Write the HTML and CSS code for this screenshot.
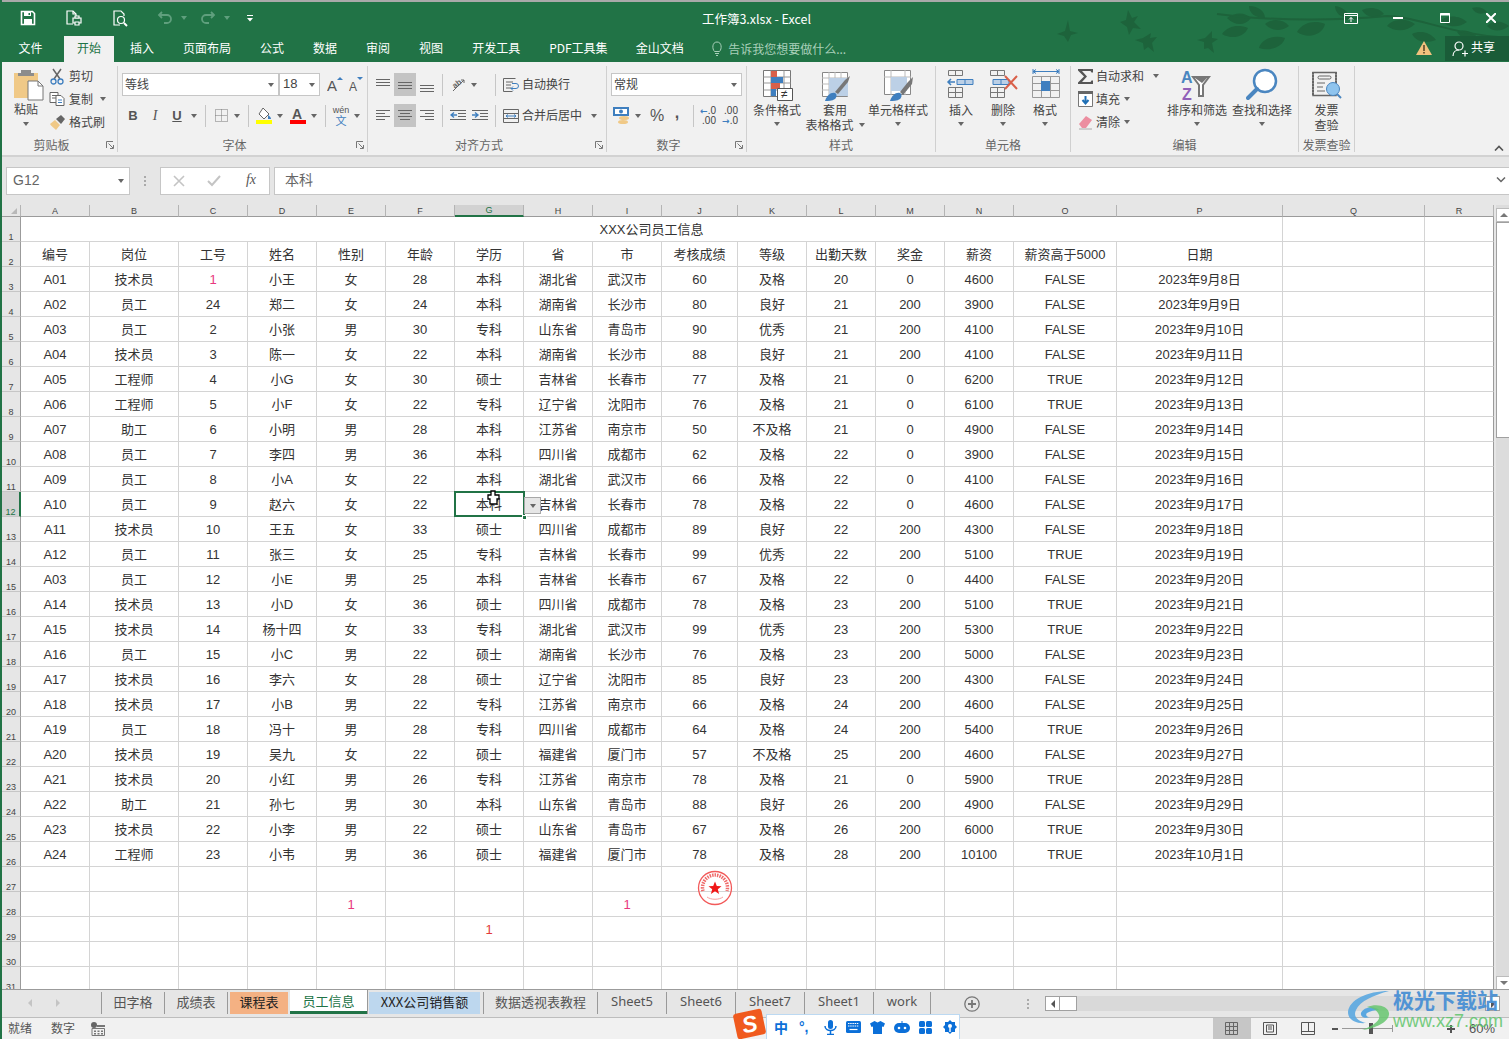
FILE: index.html
```html
<!DOCTYPE html>
<html lang="zh-CN">
<head>
<meta charset="utf-8">
<title>工作簿3.xlsx - Excel</title>
<link rel="stylesheet" href="styles.css">
</head>
<body>
<div class="app">
  <div class="top-strip"></div>
  <header class="head">
    <svg class="deco" width="470" height="60" viewBox="0 0 470 60" fill="#1d633b">
      <g transform="translate(-22 2)">
      <path d="M40 30l8-3 3-11 2 11 8 2-7 2-3 7-4-6zM103 18l6-2 2-10 4 8 6-2-4 6 7 7-8-1-4 7-2-8zM118 36l8-2 8-5-1 5 7-1-5 6 2 9-6-5-4 3-1-7zM180 36l8-2 7-7v7l6 1-6 4 2 10-6-5-4 1 0-7z"/>
      <path d="M210 14c8-6 18-6 24 0-6 8-16 8-24 0zM232 2c10 0 16 6 16 12-10 0-16-5-16-12zM205 30c6-8 16-10 26-6-4 9-16 12-26 6zM248 20c8-6 18-5 24 2-8 6-18 5-24-2zM280 28c6-10 18-12 28-8-2 10-16 16-28 8zM268 34c-2 8-14 14-26 10 2-8 14-14 26-10zM345 6c8-4 18-2 22 4-8 5-18 4-22-4zM370 22c6-8 20-8 28-2-8 8-20 8-28 2zM395 30c8-4 18-2 24 6-10 4-20 2-24-6zM424 16c8-6 20-4 26 2-8 6-20 6-26-2zM440 28c8-4 18 0 22 8-10 2-18-2-22-8zM455 4c6-2 12 0 15 4-6 3-12 2-15-4zM432 42c2-6 8-10 14-8 0 8-6 14-14 8zM318 2c8 1 14 6 14 12-8 0-14-5-14-12zM470 22c6-6 14-6 22 0-8 6-16 6-22 0zM478 34c6-4 12-2 16 6-8 2-14 0-16-6z"/>
      <path d="M200 10c60 8 130 6 170 2 30 0 60 18 122 22" fill="none" stroke="#1d633b" stroke-width="2"/>
      </g>
    </svg>
    <div class="titlebar">
      <div class="qat">
        <svg class="q1" width="16" height="16" viewBox="0 0 16 16"><path d="M1.500 1.500h11l2 2v11h-13z" fill="none" stroke="#fff" stroke-width="1.600"/><path d="M4 2h7v4H4zM4 9h8v5H4z" fill="#fff"/><path d="M8.500 3h1.500v2H8.500z" fill="#217346"/></svg>
        <svg class="q2" width="18" height="18" viewBox="0 0 18 18" fill="none" stroke="#fff" stroke-width="1.200"><path d="M8 15H2V2h6l3 3v3"/><path d="M8 2v3h3"/><path d="M8 9h8v5H8z" fill="#217346"/><path d="M10 7h4v2h-4zM10 13h4v3h-4z" fill="#217346"/></svg>
        <svg class="q3" width="18" height="18" viewBox="0 0 18 18" fill="none" stroke="#fff" stroke-width="1.200"><path d="M8 16H2V2h7l3 3v2"/><circle cx="9" cy="11" r="3.500"/><path d="M12 14l3 3" stroke-width="2"/></svg>
        <svg class="q4" width="16" height="16" viewBox="0 0 16 16" fill="none" stroke="#5f9f7d" stroke-width="1.800"><path d="M5 2L2 5l3 3M2.500 5H10a4 4 0 0 1 0 8H7"/></svg>
        <i class="caret dim"></i>
        <svg class="q5" width="16" height="16" viewBox="0 0 16 16" fill="none" stroke="#5f9f7d" stroke-width="1.800"><path d="M11 2l3 3-3 3M13.500 5H6a4 4 0 0 0 0 8h3"/></svg>
        <i class="caret dim"></i>
        <svg class="q6" width="8" height="8" viewBox="0 0 8 8" fill="#fff"><path d="M1 1h6v1H1zM1 4h6L4 7.500z"/></svg>
      </div>
      <div class="doc-title">工作簿3.xlsx - Excel</div>
      <div class="winctl">
        <svg width="14" height="11" viewBox="0 0 14 11" fill="none" stroke="#fff"><path d="M.5.500h13v10H.5z"/><path d="M.5 2.500h13"/><path d="M7 9V4.500M5 6.500l2-2 2 2"/></svg>
        <svg class="w-min" width="10" height="10" viewBox="0 0 10 10"><path d="M0 4h10v2H0z" fill="#fff"/></svg>
        <svg class="w-max" width="10" height="10" viewBox="0 0 10 10" fill="none" stroke="#fff"><path d="M.5.500h9v9h-9z"/><path d="M0 1.500h10" stroke-width="2"/></svg>
        <svg class="w-close" width="10" height="10" viewBox="0 0 10 10" fill="none" stroke="#fff" stroke-width="2"><path d="M0 0l10 10M10 0L0 10"/></svg>
      </div>
    </div>
    <nav class="tabs">
      <span class="tab tab-file">文件</span>
      <span class="tab tab-on">开始</span>
      <span class="tab">插入</span>
      <span class="tab">页面布局</span>
      <span class="tab">公式</span>
      <span class="tab">数据</span>
      <span class="tab">审阅</span>
      <span class="tab">视图</span>
      <span class="tab">开发工具</span>
      <span class="tab">PDF工具集</span>
      <span class="tab t-wps">金山文档</span>
      <span class="tell">
        <svg width="12" height="15" viewBox="0 0 12 15" fill="none" stroke="#a9d0ba"><path d="M3.500 10.500C1 8 1 1 6 1s5 7 2.500 9.500zM4 12.500h4M5 14.500h2"/></svg>
        告诉我您想要做什么...
      </span>
      <svg class="warn" width="16" height="14" viewBox="0 0 16 14"><path d="M8 0l8 14H0z" fill="#f2c27e"/><path d="M7.200 4h1.600v6H7.200zM7.200 11h1.600v1.600H7.200z" fill="#5b4a2a"/></svg>
      <span class="share">
        <svg width="16" height="16" viewBox="0 0 16 16" fill="none" stroke="#fff" stroke-width="1.200"><circle cx="7" cy="5" r="4"/><path d="M1 15c0-4 3-6 6-6M10 12.500h6M13 9.500v6"/></svg>
        <span class="share-t">共享</span>
      </span>
    </nav>
  </header>

  <section class="ribbon">
    <div class="group g-clip">
      <div class="gbody">
        <div class="big b-paste">
          <svg class="paste-ic" width="32" height="34" viewBox="0 0 32 34"><path d="M2 5h24v25H2z" fill="#f0c987"/><path d="M9 2h10v3h3v3H6V5h3z" fill="#8c8c8c"/><path d="M16 13h10l5 5v14H16z" fill="#fff" stroke="#777"/><path d="M26 13v5h5" fill="none" stroke="#777"/></svg>
          <span class="bl bl-up">粘贴</span><i class="caret"></i>
        </div>
        <div class="stack s-clip">
          <div class="srow"><svg width="14" height="17" viewBox="0 0 14 17" fill="none"><path d="M3 1l7 10M11 1L4 11" stroke="#666" stroke-width="1.500"/><circle cx="3.500" cy="13.500" r="2.500" stroke="#3f7fbf" stroke-width="1.300"/><circle cx="10.500" cy="13.500" r="2.500" stroke="#3f7fbf" stroke-width="1.300"/></svg><span class="st">剪切</span></div>
          <div class="srow"><svg width="15" height="14" viewBox="0 0 15 14" fill="#fff" stroke="#666"><path d="M.5.500h8v10h-8zM2.500 3.500h4M2.500 6h4"/><path d="M6.500 3.500h5l3 3v7h-8z"/><path d="M8.500 8h4M8.500 10.500h4" stroke="#3f7fbf"/></svg><span class="st">复制</span><i class="caret cm1"></i></div>
          <div class="srow"><svg width="16" height="15" viewBox="0 0 16 15"><path d="M1 9l5-4 5 5-4 5C5 13 2 11 1 9z" fill="#f0c987"/><path d="M7 4l5-4 4 4-4 5z" fill="#666"/></svg><span class="st">格式刷</span></div>
        </div>
      </div>
      <div class="glabel lp">剪贴板<svg class="launch" width="8" height="8" viewBox="0 0 8 8" fill="none" stroke="#777"><path d="M.5 7V.5H7M2.500 2.500L7 7M4 7.500h3.500V4"/></svg></div>
    </div>

    <div class="group g-font">
      <div class="gbody col">
        <div class="row1">
          <span class="sel s-font"><span class="sv">等线</span><i class="caret"></i></span>
          <span class="sel s-size"><span class="sv">18</span><i class="caret"></i></span>
          <svg class="fs" width="16" height="16" viewBox="0 0 16 16"><text x="0" y="14" class="svgA">A</text><path d="M10 3l3-3 3 3z" fill="#3f7fbf"/></svg>
          <svg class="fs2" width="14" height="16" viewBox="0 0 14 16"><text x="0" y="14" class="svgA2">A</text><path d="M8 0h6l-3 3z" fill="#3f7fbf"/></svg>
        </div>
        <div class="row2">
          <span class="ib strong">B</span>
          <span class="ib ital">I</span>
          <span class="ib under">U</span>
          <span class="cb w12"><i class="caret"></i></span>
          <span class="vsep v1"></span>
          <span class="ib"><svg width="13" height="13" viewBox="0 0 13 13" fill="none" stroke="#777" stroke-dasharray="1 1"><path d="M.5.500h12v12H.5zM6.500.500v12M.5 6.500h12"/></svg></span>
          <span class="cb"><i class="caret"></i></span>
          <span class="vsep v2"></span>
          <span class="ib"><svg width="16" height="17" viewBox="0 0 16 17"><path d="M7 1l6 6-5 5-5-5z" fill="#fff" stroke="#666"/><path d="M12 8c2 1 3 3 3 4h-3z" fill="#3f7fbf"/><path d="M0 13h16v4H0z" fill="#ffff00"/></svg></span>
          <span class="cb"><i class="caret"></i></span>
          <span class="ib m2"><svg width="16" height="17" viewBox="0 0 16 17"><text x="2" y="12" class="svgA3">A</text><path d="M0 13h16v4H0z" fill="#f00"/></svg></span>
          <span class="cb"><i class="caret"></i></span>
          <span class="vsep v3"></span>
          <span class="ib wen">wén<b>文</b></span>
          <span class="cb"><i class="caret"></i></span>
        </div>
      </div>
      <div class="glabel lp">字体<svg class="launch" width="8" height="8" viewBox="0 0 8 8" fill="none" stroke="#777"><path d="M.5 7V.5H7M2.500 2.500L7 7M4 7.500h3.500V4"/></svg></div>
    </div>

    <div class="group g-align">
      <div class="gbody col">
        <div class="row1">
          <span class="ib"><svg width="14" height="14" viewBox="0 0 14 14" stroke="#666"><path d="M0 1.500h14M0 4.500h14M0 7.500h14"/></svg></span>
          <span class="ib ibon"><svg width="14" height="14" viewBox="0 0 14 14" stroke="#666"><path d="M0 4.500h14M0 7.500h14M0 10.500h14"/></svg></span>
          <span class="ib"><svg width="14" height="14" viewBox="0 0 14 14" stroke="#666"><path d="M0 7.500h14M0 10.500h14M0 13.500h14"/></svg></span>
          <span class="vsep va"></span>
          <span class="ib"><svg class="orient" width="17" height="17" viewBox="0 0 17 17" fill="none"><text x="2" y="11" transform="rotate(-38 6 8)" class="svgab">ab</text><path d="M3 15L14 4" stroke="#666"/><path d="M11 4h3v3" stroke="#666"/></svg></span>
          <span class="cb"><i class="caret"></i></span>
          <span class="vsep vb"></span>
          <svg class="mi" width="16" height="16" viewBox="0 0 16 16" fill="none" stroke="#666"><path d="M.5 1.500h12M.5 1.500v13h9M3 5h7M3 8h5M3 11h5"/><path d="M8 11.500h5a2 2 0 0 0 0-5H9M10 9.500l-2 2 2 2" stroke="#3f7fbf"/></svg>
          <span class="st st3">自动换行</span>
        </div>
        <div class="row2">
          <span class="ib"><svg width="14" height="12" viewBox="0 0 14 12" stroke="#666"><path d="M0 .5h14M0 3.500h9M0 6.500h14M0 9.500h9"/></svg></span>
          <span class="ib ibon"><svg width="14" height="12" viewBox="0 0 14 12" stroke="#666"><path d="M0 .5h14M2 3.500h10M0 6.500h14M2 9.500h10"/></svg></span>
          <span class="ib"><svg width="14" height="12" viewBox="0 0 14 12" stroke="#666"><path d="M0 .5h14M5 3.500h9M0 6.500h14M5 9.500h9"/></svg></span>
          <span class="vsep va"></span>
          <span class="ib"><svg width="16" height="12" viewBox="0 0 16 12" fill="none" stroke="#666"><path d="M0 .5h16M8 3.500h8M8 6.500h8M0 9.500h16"/><path d="M7 5H1M4 2.500L1 5l3 2.500" stroke="#3f7fbf" stroke-width="1.400"/></svg></span>
          <span class="ib"><svg width="16" height="12" viewBox="0 0 16 12" fill="none" stroke="#666"><path d="M0 .5h16M8 3.500h8M8 6.500h8M0 9.500h16"/><path d="M0 5h6M3 2.500L6 5 3 7.500" stroke="#3f7fbf" stroke-width="1.400"/></svg></span>
          <span class="vsep vc"></span>
          <svg class="mi" width="16" height="14" viewBox="0 0 16 14" fill="none" stroke="#666"><path d="M.5.500h15v13H.5zM.5 4.500h15M.5 9.500h15"/><path d="M3 7h10M3 7l2-1.500M3 7l2 1.500M13 7l-2-1.500M13 7l-2 1.500" stroke="#3f7fbf"/></svg>
          <span class="st st3">合并后居中</span>
          <i class="caret c-merge"></i>
        </div>
      </div>
      <div class="glabel lp">对齐方式<svg class="launch" width="8" height="8" viewBox="0 0 8 8" fill="none" stroke="#777"><path d="M.5 7V.5H7M2.500 2.500L7 7M4 7.500h3.500V4"/></svg></div>
    </div>

    <div class="group g-num">
      <div class="gbody col">
        <div class="row1"><span class="sel s-num"><span class="sv">常规</span><i class="caret"></i></span></div>
        <div class="row2">
          <span class="ib"><svg width="18" height="17" viewBox="0 0 18 17"><path d="M0 0h16v9H0z" fill="#3f7fbf"/><path d="M2 2h12v5H2z" fill="#fff"/><circle cx="8" cy="4.500" r="2" fill="#3f7fbf"/><ellipse cx="11" cy="11" rx="5" ry="2" fill="#f0c987"/><ellipse cx="10" cy="15" rx="5" ry="2" fill="#f0c987"/></svg></span>
          <span class="cb"><i class="caret"></i></span>
          <span class="ib pct">%</span>
          <span class="ib comma">,</span>
          <span class="vsep vd"></span>
          <span class="ib dec"><span><b class="arr">←</b>.0</span><span>.00</span></span>
          <span class="ib dec"><span>.00</span><span><b class="arr">→</b>.0</span></span>
        </div>
      </div>
      <div class="glabel lp">数字<svg class="launch" width="8" height="8" viewBox="0 0 8 8" fill="none" stroke="#777"><path d="M.5 7V.5H7M2.500 2.500L7 7M4 7.500h3.500V4"/></svg></div>
    </div>

    <div class="group g-style">
      <div class="gbody">
        <div class="big b58">
          <svg width="32" height="34" viewBox="0 0 32 34"><path d="M2.500 2.500h27v26h-27z" fill="#fff" stroke="#777"/><path d="M2.500 9h27M2.500 15h27M2.500 22h27M10 2.500v26M23 2.500v26" stroke="#999" fill="none"/><path d="M10 3h6v6h-6zM10 15h9v6h-9z" fill="#d9604a"/><path d="M10 9h12v6H10zM10 21h5v7h-5z" fill="#3f7fbf"/><path d="M16.500 20.500h15v12h-15z" fill="#fff" stroke="#555"/><text x="20" y="30" class="svgne">≠</text></svg>
          <span class="bl">条件格式</span><i class="caret"></i>
        </div>
        <div class="big b58">
          <svg width="32" height="34" viewBox="0 0 32 34"><path d="M3.500 4.500h25v24h-25z" fill="#fff" stroke="#888"/><path d="M3 10h26M3 16h26M3 22h26M10 4v24M16 4v24M22 4v24" stroke="#bbb"/><path d="M10 10h19v18H10z" fill="#bcd0e6"/><path d="M6 33c2-6 6-9 10-8 2 1 2 4 0 6-3 2-7 2-10 2z" fill="#3f7fbf"/><path d="M16 24l10-12 5-4-2 6-10 12z" fill="#777"/></svg>
          <span class="bl">套用</span><span class="bl">表格格式<i class="caret cin"></i></span>
        </div>
        <div class="big b68">
          <svg width="32" height="34" viewBox="0 0 32 34"><path d="M2.500 2.500h26v24h-26z" fill="#fff" stroke="#888"/><path d="M2 9h27M9 2v25M23 2v25" stroke="#bbb"/><path d="M9 9h16v14H9z" fill="#bcd0e6"/><path d="M8 33c2-6 6-9 10-8 2 1 2 4 0 6-3 2-7 2-10 2z" fill="#3f7fbf"/><path d="M18 24l8-10 5-5-1 7-9 11z" fill="#777"/></svg>
          <span class="bl">单元格样式</span><i class="caret"></i>
        </div>
      </div>
      <div class="glabel">样式</div>
    </div>

    <div class="group g-cell">
      <div class="gbody">
        <div class="big b42">
          <svg width="32" height="34" viewBox="0 0 32 34" fill="none" stroke="#777"><path d="M3.500 2.500h14v5h-14zM10.500 2.500v5M3.500 19.500h14v10h-14zM3.500 24.500h14M10.500 19.500v10"/><path d="M12 11.500h16v5H12zM20 11.500v5" fill="#bcd0e6" stroke="#3f7fbf"/><path d="M10 14H3M6 11l-3 3 3 3" stroke="#3f7fbf" stroke-width="1.500"/></svg>
          <span class="bl">插入</span><i class="caret"></i>
        </div>
        <div class="big b42">
          <svg width="32" height="34" viewBox="0 0 32 34" fill="none" stroke="#777"><path d="M3.500 2.500h14v5h-14zM10.500 2.500v5M3.500 19.500h14v10h-14zM3.500 24.500h14M10.500 19.500v10"/><path d="M6 11.500h16v5H6zM14 11.500v5" fill="#bcd0e6" stroke="#3f7fbf"/><path d="M18 8l12 13M30 8L18 21" stroke="#d9604a" stroke-width="2"/></svg>
          <span class="bl">删除</span><i class="caret"></i>
        </div>
        <div class="big b42">
          <svg width="32" height="34" viewBox="0 0 32 34" fill="none" stroke="#777"><path d="M3.500 8.500h27v21h-27zM3.500 15.500h27M3.500 22.500h27M12.500 8.500v21M21.500 8.500v21" stroke="#999"/><path d="M12 13h9v10h-9z" fill="#3f7fbf" stroke="none"/><path d="M4 3.500h26M4 1v5M30 1v5M4 3.500l3-2M4 3.500l3 2M30 3.500l-3-2M30 3.500l-3 2" stroke="#3f7fbf"/></svg>
          <span class="bl">格式</span><i class="caret"></i>
        </div>
      </div>
      <div class="glabel">单元格</div>
    </div>

    <div class="group g-edit">
      <div class="gbody">
        <div class="stack s-edit">
          <div class="srow"><svg width="15" height="15" viewBox="0 0 15 15"><path d="M0 0h15v3.500h-1.500L12.500 2H4l5 5.500L4 13h8.500l1-1.500H15V15H0v-1.500L6 7.500 0 1.500z" fill="#555"/></svg><span class="st st4">自动求和</span><i class="caret c-sum"></i></div>
          <div class="srow"><svg width="15" height="16" viewBox="0 0 15 16"><path d="M.5.500h14v15H.5z" fill="#fff" stroke="#777"/><path d="M0 0h15v3H0z" fill="#666"/><path d="M7.500 5v7M4.500 9l3 3.500 3-3.500" fill="none" stroke="#1f6fb5" stroke-width="2"/></svg><span class="st st4">填充</span><i class="caret c-in"></i></div>
          <div class="srow"><svg width="15" height="15" viewBox="0 0 15 15"><path d="M1 9l7-8 6 4-6 8H4z" fill="#ec8ea0"/><path d="M1 14h13" stroke="#aaa"/></svg><span class="st st4">清除</span><i class="caret c-in"></i></div>
        </div>
        <div class="big b64">
          <svg width="32" height="34" viewBox="0 0 32 34"><text x="0" y="15" class="svgaz a">A</text><text x="1" y="32" class="svgaz z">Z</text><path d="M12 9h16l-6 8v11h-4V17z" fill="#fff" stroke="#777" stroke-width="2"/><path d="M14 10h12l-5 5z" fill="#777"/></svg>
          <span class="bl">排序和筛选</span><i class="caret"></i>
        </div>
        <div class="big b64 m1">
          <svg width="32" height="34" viewBox="0 0 32 34" fill="none"><circle cx="19" cy="13" r="11" stroke="#4a86c0" stroke-width="2.500" fill="#fff"/><path d="M11 21L2 30" stroke="#4a86c0" stroke-width="4" stroke-linecap="round"/></svg>
          <span class="bl">查找和选择</span><i class="caret"></i>
        </div>
      </div>
      <div class="glabel">编辑</div>
    </div>

    <div class="group g-inv">
      <div class="gbody">
        <div class="big b55">
          <svg width="32" height="34" viewBox="0 0 32 34" fill="none"><path d="M2 4.500h23v23H2z" stroke="#666" stroke-width="1.500" fill="#f1f1f1"/><path d="M2 4v24M25 4v11" stroke="#666" stroke-dasharray="2 1" stroke-width="2"/><rect x="7" y="8" width="13" height="3" rx="1.500" stroke="#666"/><path d="M6 15h8M6 19h6M6 23h8" stroke="#666"/><circle cx="22" cy="21" r="6.500" fill="#8fc4ee" stroke="#4a86c0"/><path d="M26 26l4 4" stroke="#4a86c0" stroke-width="2"/></svg>
          <span class="bl">发票</span><span class="bl">查验</span>
        </div>
      </div>
      <div class="glabel">发票查验</div>
    </div>
    <svg class="collapse" width="10" height="6" viewBox="0 0 10 6" fill="none" stroke="#555" stroke-width="1.600"><path d="M1 5.500l4-4 4 4"/></svg>
  </section>

  <section class="fbar">
    <span class="namebox"><span class="sv">G12</span><i class="caret"></i></span>
    <span class="dots"><i></i><i></i><i></i></span>
    <span class="fxbox">
      <svg width="12" height="12" viewBox="0 0 12 12" stroke="#c4c4c4" stroke-width="1.600" fill="none"><path d="M1 1l10 10M11 1L1 11"/></svg>
      <svg width="14" height="12" viewBox="0 0 14 12" stroke="#c4c4c4" stroke-width="2" fill="none"><path d="M1 6l4 4 8-9"/></svg>
      <span class="fx">fx</span>
    </span>
    <span class="finput"><span class="sv">本科</span><svg width="10" height="6" viewBox="0 0 10 6" fill="none" stroke="#666" stroke-width="1.500"><path d="M1 .5l4 4 4-4"/></svg></span>
  </section>

  <main class="sheet">
    <table class="grid">
      <colgroup>
        <col class="w19"><col class="w69"><col class="w89"><col class="w69"><col class="w69"><col class="w69"><col class="w69"><col class="w69"><col class="w69"><col class="w69"><col class="w76"><col class="w69"><col class="w69"><col class="w69"><col class="w69"><col class="w103"><col class="w166"><col class="w142"><col class="w69">
      </colgroup>
      <thead>
        <tr><th class="corner"><i></i></th><th>A</th><th>B</th><th>C</th><th>D</th><th>E</th><th>F</th><th class="hsel">G</th><th>H</th><th>I</th><th>J</th><th>K</th><th>L</th><th>M</th><th>N</th><th>O</th><th>P</th><th>Q</th><th>R</th></tr>
      </thead>
      <tbody>
        <tr><td class="rh">1</td><td colspan="16">XXX公司员工信息</td><td></td><td class="last"></td></tr>
        <tr><td class="rh">2</td><td>编号</td><td>岗位</td><td>工号</td><td>姓名</td><td>性别</td><td>年龄</td><td>学历</td><td>省</td><td>市</td><td>考核成绩</td><td>等级</td><td>出勤天数</td><td>奖金</td><td>薪资</td><td>薪资高于5000</td><td>日期</td><td></td><td class="last"></td></tr>
        <tr><td class="rh">3</td><td>A01</td><td>技术员</td><td class="pink">1</td><td>小王</td><td>女</td><td>28</td><td>本科</td><td>湖北省</td><td>武汉市</td><td>60</td><td>及格</td><td>20</td><td>0</td><td>4600</td><td>FALSE</td><td>2023年9月8日</td><td></td><td class="last"></td></tr>
        <tr><td class="rh">4</td><td>A02</td><td>员工</td><td>24</td><td>郑二</td><td>女</td><td>24</td><td>本科</td><td>湖南省</td><td>长沙市</td><td>80</td><td>良好</td><td>21</td><td>200</td><td>3900</td><td>FALSE</td><td>2023年9月9日</td><td></td><td class="last"></td></tr>
        <tr><td class="rh">5</td><td>A03</td><td>员工</td><td>2</td><td>小张</td><td>男</td><td>30</td><td>专科</td><td>山东省</td><td>青岛市</td><td>90</td><td>优秀</td><td>21</td><td>200</td><td>4100</td><td>FALSE</td><td>2023年9月10日</td><td></td><td class="last"></td></tr>
        <tr><td class="rh">6</td><td>A04</td><td>技术员</td><td>3</td><td>陈一</td><td>女</td><td>22</td><td>本科</td><td>湖南省</td><td>长沙市</td><td>88</td><td>良好</td><td>21</td><td>200</td><td>4100</td><td>FALSE</td><td>2023年9月11日</td><td></td><td class="last"></td></tr>
        <tr><td class="rh">7</td><td>A05</td><td>工程师</td><td>4</td><td>小G</td><td>女</td><td>30</td><td>硕士</td><td>吉林省</td><td>长春市</td><td>77</td><td>及格</td><td>21</td><td>0</td><td>6200</td><td>TRUE</td><td>2023年9月12日</td><td></td><td class="last"></td></tr>
        <tr><td class="rh">8</td><td>A06</td><td>工程师</td><td>5</td><td>小F</td><td>女</td><td>22</td><td>专科</td><td>辽宁省</td><td>沈阳市</td><td>76</td><td>及格</td><td>21</td><td>0</td><td>6100</td><td>TRUE</td><td>2023年9月13日</td><td></td><td class="last"></td></tr>
        <tr><td class="rh">9</td><td>A07</td><td>助工</td><td>6</td><td>小明</td><td>男</td><td>28</td><td>本科</td><td>江苏省</td><td>南京市</td><td>50</td><td>不及格</td><td>21</td><td>0</td><td>4900</td><td>FALSE</td><td>2023年9月14日</td><td></td><td class="last"></td></tr>
        <tr><td class="rh">10</td><td>A08</td><td>员工</td><td>7</td><td>李四</td><td>男</td><td>36</td><td>本科</td><td>四川省</td><td>成都市</td><td>62</td><td>及格</td><td>22</td><td>0</td><td>3900</td><td>FALSE</td><td>2023年9月15日</td><td></td><td class="last"></td></tr>
        <tr><td class="rh">11</td><td>A09</td><td>员工</td><td>8</td><td>小A</td><td>女</td><td>22</td><td>本科</td><td>湖北省</td><td>武汉市</td><td>66</td><td>及格</td><td>22</td><td>0</td><td>4100</td><td>FALSE</td><td>2023年9月16日</td><td></td><td class="last"></td></tr>
        <tr><td class="rh rsel">12</td><td>A10</td><td>员工</td><td>9</td><td>赵六</td><td>女</td><td>22</td><td class="cur">本科<span class="selbox"></span><span class="handle"></span><span class="ddbtn"><i class="caret"></i></span><svg class="pointer" width="15" height="17" viewBox="0 0 15 17"><path d="M5 1h4v4h4v4h-2v5H4V9H2V5h3z" fill="#fff" stroke="#000" stroke-width="1.300"/></svg></td><td>吉林省</td><td>长春市</td><td>78</td><td>及格</td><td>22</td><td>0</td><td>4600</td><td>FALSE</td><td>2023年9月17日</td><td></td><td class="last"></td></tr>
        <tr><td class="rh">13</td><td>A11</td><td>技术员</td><td>10</td><td>王五</td><td>女</td><td>33</td><td>硕士</td><td>四川省</td><td>成都市</td><td>89</td><td>良好</td><td>22</td><td>200</td><td>4300</td><td>FALSE</td><td>2023年9月18日</td><td></td><td class="last"></td></tr>
        <tr><td class="rh">14</td><td>A12</td><td>员工</td><td>11</td><td>张三</td><td>女</td><td>25</td><td>专科</td><td>吉林省</td><td>长春市</td><td>99</td><td>优秀</td><td>22</td><td>200</td><td>5100</td><td>TRUE</td><td>2023年9月19日</td><td></td><td class="last"></td></tr>
        <tr><td class="rh">15</td><td>A03</td><td>员工</td><td>12</td><td>小E</td><td>男</td><td>25</td><td>本科</td><td>吉林省</td><td>长春市</td><td>67</td><td>及格</td><td>22</td><td>0</td><td>4400</td><td>FALSE</td><td>2023年9月20日</td><td></td><td class="last"></td></tr>
        <tr><td class="rh">16</td><td>A14</td><td>技术员</td><td>13</td><td>小D</td><td>女</td><td>36</td><td>硕士</td><td>四川省</td><td>成都市</td><td>78</td><td>及格</td><td>23</td><td>200</td><td>5100</td><td>TRUE</td><td>2023年9月21日</td><td></td><td class="last"></td></tr>
        <tr><td class="rh">17</td><td>A15</td><td>技术员</td><td>14</td><td>杨十四</td><td>女</td><td>33</td><td>专科</td><td>湖北省</td><td>武汉市</td><td>99</td><td>优秀</td><td>23</td><td>200</td><td>5300</td><td>TRUE</td><td>2023年9月22日</td><td></td><td class="last"></td></tr>
        <tr><td class="rh">18</td><td>A16</td><td>员工</td><td>15</td><td>小C</td><td>男</td><td>22</td><td>硕士</td><td>湖南省</td><td>长沙市</td><td>76</td><td>及格</td><td>23</td><td>200</td><td>5000</td><td>FALSE</td><td>2023年9月23日</td><td></td><td class="last"></td></tr>
        <tr><td class="rh">19</td><td>A17</td><td>技术员</td><td>16</td><td>李六</td><td>女</td><td>28</td><td>硕士</td><td>辽宁省</td><td>沈阳市</td><td>85</td><td>良好</td><td>23</td><td>200</td><td>4300</td><td>FALSE</td><td>2023年9月24日</td><td></td><td class="last"></td></tr>
        <tr><td class="rh">20</td><td>A18</td><td>技术员</td><td>17</td><td>小B</td><td>男</td><td>22</td><td>专科</td><td>江苏省</td><td>南京市</td><td>66</td><td>及格</td><td>24</td><td>200</td><td>4600</td><td>FALSE</td><td>2023年9月25日</td><td></td><td class="last"></td></tr>
        <tr><td class="rh">21</td><td>A19</td><td>员工</td><td>18</td><td>冯十</td><td>男</td><td>28</td><td>专科</td><td>四川省</td><td>成都市</td><td>64</td><td>及格</td><td>24</td><td>200</td><td>5400</td><td>TRUE</td><td>2023年9月26日</td><td></td><td class="last"></td></tr>
        <tr><td class="rh">22</td><td>A20</td><td>技术员</td><td>19</td><td>吴九</td><td>女</td><td>22</td><td>硕士</td><td>福建省</td><td>厦门市</td><td>57</td><td>不及格</td><td>25</td><td>200</td><td>4600</td><td>FALSE</td><td>2023年9月27日</td><td></td><td class="last"></td></tr>
        <tr><td class="rh">23</td><td>A21</td><td>技术员</td><td>20</td><td>小红</td><td>男</td><td>26</td><td>专科</td><td>江苏省</td><td>南京市</td><td>78</td><td>及格</td><td>21</td><td>0</td><td>5900</td><td>TRUE</td><td>2023年9月28日</td><td></td><td class="last"></td></tr>
        <tr><td class="rh">24</td><td>A22</td><td>助工</td><td>21</td><td>孙七</td><td>男</td><td>30</td><td>本科</td><td>山东省</td><td>青岛市</td><td>88</td><td>良好</td><td>26</td><td>200</td><td>4900</td><td>FALSE</td><td>2023年9月29日</td><td></td><td class="last"></td></tr>
        <tr><td class="rh">25</td><td>A23</td><td>技术员</td><td>22</td><td>小李</td><td>男</td><td>22</td><td>硕士</td><td>山东省</td><td>青岛市</td><td>67</td><td>及格</td><td>26</td><td>200</td><td>6000</td><td>TRUE</td><td>2023年9月30日</td><td></td><td class="last"></td></tr>
        <tr><td class="rh">26</td><td>A24</td><td>工程师</td><td>23</td><td>小韦</td><td>男</td><td>36</td><td>硕士</td><td>福建省</td><td>厦门市</td><td>78</td><td>及格</td><td>28</td><td>200</td><td>10100</td><td>TRUE</td><td>2023年10月1日</td><td></td><td class="last"></td></tr>
        <tr><td class="rh">27</td><td></td><td></td><td></td><td></td><td></td><td></td><td></td><td></td><td></td><td class="stampcell"><svg class="stamp" width="36" height="36" viewBox="0 0 36 36" fill="none"><circle cx="18" cy="18" r="16.500" stroke="#f25a5a" stroke-width="1.300"/><path d="M6 21a12.500 12.500 0 1 1 24 0" stroke="#ef6a6a" stroke-width="3.500" stroke-dasharray="1.500 1"/><path d="M18 11.500l1.800 4.600 4.700.2-3.700 3 1.300 4.700-4.100-2.700-4.100 2.700 1.300-4.700-3.700-3 4.700-.2z" fill="#f01818"/><path d="M10 27c4 3 12 3 16 0" stroke="#f7a0a0"/></svg></td><td></td><td></td><td></td><td></td><td></td><td></td><td></td><td class="last"></td></tr>
        <tr><td class="rh">28</td><td></td><td></td><td></td><td></td><td class="pink">1</td><td></td><td></td><td></td><td class="pink">1</td><td></td><td></td><td></td><td></td><td></td><td></td><td></td><td></td><td class="last"></td></tr>
        <tr><td class="rh">29</td><td></td><td></td><td></td><td></td><td></td><td></td><td class="red">1</td><td></td><td></td><td></td><td></td><td></td><td></td><td></td><td></td><td></td><td></td><td class="last"></td></tr>
        <tr><td class="rh">30</td><td></td><td></td><td></td><td></td><td></td><td></td><td></td><td></td><td></td><td></td><td></td><td></td><td></td><td></td><td></td><td></td><td></td><td class="last"></td></tr>
        <tr><td class="rh">31</td><td></td><td></td><td></td><td></td><td></td><td></td><td></td><td></td><td></td><td></td><td></td><td></td><td></td><td></td><td></td><td></td><td></td><td class="last"></td></tr>
      </tbody>
    </table>
    <div class="vscroll">
      <span class="vbtn up"><i class="caret-up"></i></span>
      <span class="vthumb"></span>
      <span class="vtrack"></span>
      <span class="vbtn down"><i class="caret"></i></span>
    </div>
  </main>

  <section class="sheetbar">
    <div class="nav"><i class="tri-l"></i><i class="tri-r"></i></div>
    <span class="stab sw63">田字格</span>
    <span class="stab sw63">成绩表</span>
    <span class="stab orange">课程表</span>
    <span class="stab active">员工信息</span>
    <span class="stab blue">XXX公司销售额</span>
    <span class="stab pivot">数据透视表教程</span>
    <span class="stab s-lat">Sheet5</span>
    <span class="stab s-lat">Sheet6</span>
    <span class="stab s-lat">Sheet7</span>
    <span class="stab s-lat">Sheet1</span>
    <span class="stab s-lat s-work">work</span>
    <svg class="addsheet" width="16" height="16" viewBox="0 0 16 16" fill="none" stroke="#777"><circle cx="8" cy="8" r="7.200" stroke-width="1.300"/><path d="M8 4v8M4 8h8" stroke-width="1.800"/></svg>
    <span class="dots d2"><i></i><i></i><i></i></span>
    <div class="hscroll">
      <span class="hbtn"><i class="tri-l dark"></i></span>
      <span class="hthumb"></span>
      <span class="htrack"></span>
      <span class="hbtn"><i class="tri-r dark"></i></span>
    </div>
  </section>

  <footer class="status">
    <span class="stat s1">就绪</span>
    <span class="stat s2">数字</span>
    <svg class="s3" width="14" height="14" viewBox="0 0 14 14"><circle cx="3" cy="3" r="3" fill="#666"/><path d="M1 6.500h12.500v7H1z" fill="none" stroke="#777"/><path d="M3 8.500h2v1.500H3zM6.500 8.500h2v1.500h-2zM10 8.500h2v1.500h-2zM3 11h2v1.500H3zM6.500 11h2v1.500h-2zM10 11h2v1.500h-2zM6 3h8v2H6z" fill="#777"/></svg>
    <span class="view von"><svg width="14" height="13" viewBox="0 0 14 13" fill="none" stroke="#666"><path d="M.5.500h12v12H.5zM.5 4.500h12M.5 8.500h12M4.500.5v12M8.500.5v12"/></svg></span>
    <span class="view"><svg width="14" height="13" viewBox="0 0 14 13" fill="none" stroke="#555"><path d="M.5.500h13v12H.5zM3.500 3v7h7V3zM5 5h4M5 7h4"/></svg></span>
    <span class="view"><svg width="14" height="13" viewBox="0 0 14 13" fill="none" stroke="#555"><path d="M.5.500h13v12H.5zM.5 9.500h13M7.500.5v9"/></svg></span>
    <span class="zoomer">
      <i class="zm"></i>
      <span class="zline"><i class="ztick"></i><i class="zknob"></i></span>
      <i class="zp"></i>
    </span>
    <span class="zpct">60%</span>
  </footer>

  <aside class="ime">
    <span class="ime-s"><b>S</b></span>
    <div class="ime-bar">
      <b class="ime-zh">中</b>
      <b class="ime-p">°,</b>
      <svg width="13" height="15" viewBox="0 0 13 15" fill="#0b6fd8"><rect x="4" y="0" width="5" height="9" rx="2.500"/><path d="M1 6c0 6 11 6 11 0M6.500 11v3M3 14.500h7" fill="none" stroke="#0b6fd8" stroke-width="1.500"/></svg>
      <svg width="15" height="12" viewBox="0 0 15 12"><rect width="15" height="12" rx="1.500" fill="#0b6fd8"/><path d="M2 2.500h11M2 5h11" stroke="#fff" stroke-dasharray="1.500 .7"/><path d="M3.500 8.500h8" stroke="#fff" stroke-width="1.200"/></svg>
      <svg width="15" height="13" viewBox="0 0 15 13" fill="#0b6fd8"><path d="M4.500 0l3 1.500L10.500 0 15 2.500 13.500 6 12 5.500V13H3V5.500L1.500 6 0 2.500z"/></svg>
      <svg width="16" height="12" viewBox="0 0 16 12"><rect y="2" width="16" height="10" rx="5" fill="#0b6fd8"/><path d="M8 0v3" stroke="#0b6fd8"/><circle cx="5" cy="7" r="1.300" fill="#fff"/><circle cx="11" cy="7" r="1.300" fill="#fff"/></svg>
      <svg width="13" height="13" viewBox="0 0 13 13" fill="#0b6fd8"><rect width="6" height="6" rx="1.500"/><rect x="7" width="6" height="6" rx="1.500"/><rect y="7" width="6" height="6" rx="1.500"/><rect x="7" y="7" width="6" height="6" rx="1.500"/></svg>
      <svg class="ime-gear" width="14" height="14" viewBox="0 0 14 14"><path d="M7 0l2 2h3v3l2 2-2 2v3H9l-2 2-2-2H2V9L0 7l2-2V2h3z" fill="#0b6fd8"/><circle cx="7" cy="6" r="2" fill="#fff"/><path d="M6.300 7.500h1.400V12H6.300z" fill="#fff"/></svg>
    </div>
  </aside>

  <aside class="mark">
    <svg class="mark-logo" width="46" height="42" viewBox="0 0 46 42" fill="none"><path d="M42 1C20 1 2 10 1 22c0 8 8 12 18 11-9-2-13-7-10-13C13 11 27 5 42 1z" fill="#5aa7e0" opacity=".9"/><path d="M32 20c-5-5-16-3-18 3-1 4 4 6 9 4-3 0-5-2-3-4 3-2 8-3 12-3z" fill="#5aa7e0"/><path d="M20 17c10-4 21-1 22 6 1 9-15 16-27 17 10-4 19-9 17-15-2-5-6-7-12-8z" fill="#66c66e" opacity=".85"/></svg>
    <div class="mark-text"><b>极光下载站</b><span>www.xz7.com</span></div>
  </aside>
</div>
</body>
</html>
```
FILE: styles.css
```css
*{box-sizing:border-box}
html,body{margin:0;padding:0;overflow:hidden}
body{font-family:"Noto Sans CJK SC","Liberation Sans",sans-serif;font-size:12px;color:#444}
i{font-style:normal}
svg{display:block;flex:none}
.app{position:relative;width:1509px;height:1039px;display:flex;flex-direction:column;border-left:2px solid #217346;background:#f1f1f1;overflow:hidden}
.top-strip{height:2px;background:#a9a9a9;margin-left:-2px;flex:none}
.caret{display:inline-block;width:0;height:0;border-left:3.5px solid transparent;border-right:3.5px solid transparent;border-top:4px solid #666;flex:none}
.caret.dim{border-top-color:#5f9f7d}
.sv{padding-bottom:2px}

.head{position:relative;isolation:isolate;background:#217346;flex:none;color:#fff}
.deco{position:absolute;right:0;top:0;z-index:-1}
.titlebar{height:34px;display:grid;grid-template-columns:1fr auto 1fr;align-items:center}
.qat{display:flex;align-items:center;padding-left:18px;padding-bottom:2px}
.q1{margin-left:0}
.q2{margin-left:29px}
.q3{margin-left:29px}
.q4{margin-left:27px}
.qat .caret{margin-left:8px}
.q5{margin-left:13px}
.q6{margin-left:16px}
.doc-title{font-size:12.5px;padding-left:2px;padding-bottom:1px;white-space:nowrap}
.winctl{display:flex;align-items:center;justify-content:flex-end;padding-right:13px;padding-bottom:2px}
.w-min{margin-left:35px}
.w-max{margin-left:37px}
.w-close{margin-left:36px}

.tabs{height:26px;display:flex;align-items:stretch;padding-left:2px;line-height:23px;position:relative}
.tab{padding:0 14.5px;white-space:nowrap}
.tab-file{margin-right:7px}
.tab-on{background:#f1f1f1;color:#217346;padding:0 13px;margin-right:1.5px}
.t-wps{margin-left:-1px}
.tell{display:flex;align-items:center;margin-left:13px;gap:5px;color:#a9d0ba;font-size:12px;white-space:nowrap;height:24px}
.warn{position:absolute;left:1414px;top:5px}
.share{position:absolute;left:1443px;top:0;width:64px;height:25px;background:#1a5c38;display:flex;align-items:center;gap:3px;padding-left:7px}
.share-t{padding-bottom:4px}

.ribbon{height:95px;flex:none;display:flex;background:#f1f1f1;border-bottom:2px solid #d2d2d2;padding-top:4px;align-items:flex-start}
.group{height:86px;display:flex;flex-direction:column;border-right:1px solid #d0d0d0;flex:none;white-space:nowrap}
.g-clip{width:116px}
.g-font{width:250px}
.g-align{width:239px}
.g-num{width:140px}
.g-style{width:189px}
.g-cell{width:135px}
.g-edit{width:228px}
.g-inv{width:56px}
.gbody{height:72px;display:flex}
.gbody.col{flex-direction:column}
.glabel{position:relative;height:14px;line-height:14px;text-align:center;color:#666;font-size:12px}
.glabel.lp{padding-right:16px}
.launch{position:absolute;right:3px;top:3px}
.big{display:flex;flex-direction:column;align-items:center;padding-top:2px;flex:none}
.bl{line-height:15px;display:flex;align-items:center;gap:3px;height:15px}
.bl-up{padding-bottom:2px}
.big>.caret{margin-top:5px}
.big .cin{margin-left:2px}
.b-paste{width:48px}
.paste-ic{margin-left:4px}
.b58{width:58px}
.g-style .gbody{padding-left:1px}
.b68{width:68px}
.g-cell .gbody{padding-left:4px}
.b42{width:42px}
.b64{width:64px}
.m1{margin-left:1px}
.b55{width:55px}
.stack{display:flex;flex-direction:column;gap:3px;flex:none}
.srow{height:20px;display:flex;align-items:center;position:relative}
.st{margin-left:3px;padding-bottom:2px}
.s-clip{margin-left:-1px}
.s-clip .srow{width:66px}
.s-clip .srow>svg{width:16px;margin-right:1px}
.cm1{margin-left:7px}
.s-edit{margin-left:7px;width:87px}
.st4{margin-left:3px}
.c-sum{margin-left:9px}
.c-in{margin-left:4px}
.row1,.row2{display:flex;align-items:center;height:23px}
.row1{margin-top:7px}
.row2{margin-top:8px}
.g-font .row1,.g-font .row2{padding-left:4px}
.g-align .row1,.g-align .row2{padding-left:4px}
.g-num .row1,.g-num .row2{padding-left:4px}
.sel{display:flex;align-items:center;justify-content:space-between;height:23px;background:#fff;border:1px solid #c6c6c6;padding:0 4px 0 2px;color:#444;white-space:nowrap}
.s-font{width:157px}
.s-size{width:41px;padding-left:3px;font-family:"Liberation Sans",sans-serif;font-size:13px}
.s-num{width:131px}
.fs{margin-left:7px}
.fs2{margin-left:6px}
.svgA{font:15px "Liberation Sans",sans-serif;fill:#555}
.svgA2{font:12px "Liberation Sans",sans-serif;fill:#555}
.svgA3{font:bold 14px "Liberation Sans",sans-serif;fill:#555}
.svgne{font:12px "Liberation Sans",sans-serif;fill:#333}
.svgab{font:bold 8px "Liberation Sans",sans-serif;fill:#666}
.svgaz{font:bold 16px "Liberation Sans",sans-serif}
.svgaz.a{fill:#4a86c0}
.svgaz.z{fill:#9160b8}
.ib{width:22px;height:23px;display:flex;align-items:center;justify-content:center;flex:none;font-family:"Liberation Sans",sans-serif;font-size:13px;color:#555}
.ibon{background:#c4c4c4}
.orient{overflow:visible}
.strong{font-weight:bold}
.ital{font-style:italic;font-family:"Liberation Serif",serif;font-size:14px}
.under{text-decoration:underline;font-weight:bold}
.cb{width:10px;display:flex;justify-content:center;flex:none}
.w12{width:12px}
.vsep{width:1px;height:22px;background:#c6c6c6;flex:none}
.v1{margin:0 4px 0 5px}
.v2{margin:0 4px 0 6px}
.m2{margin-left:2px}
.v3{margin:0 4px 0 6px}
.va{margin:0 4px}
.vb{margin:0 7px 0 16px}
.vc{margin:0 7px 0 4px}
.vd{margin:0 2px 0 5px}
.st3{margin-left:3px}
.c-merge{margin-left:9px}
.wen{flex-direction:column;font-size:9px;line-height:9px;color:#555}
.wen b{color:#3f7fbf;font-weight:normal;font-size:11px;line-height:11px;font-family:"Noto Sans CJK SC",sans-serif}
.pct{font-size:16px;margin-left:3px}
.comma{font-weight:bold;font-size:16px;margin-left:-2px;padding-bottom:6px}
.dec{flex-direction:column;font-size:10px;line-height:10px;align-items:flex-end;padding-right:2px;color:#444}
.arr{color:#3f7fbf;font-weight:bold;font-size:9px;font-family:"DejaVu Sans",sans-serif}
.collapse{margin-left:auto;margin-right:5px;align-self:flex-end;margin-bottom:4px}

.fbar{height:48px;flex:none;background:#e6e6e6;display:flex;align-items:flex-start;padding-top:10px;font-size:14px;color:#666}
.namebox{margin-left:4px;width:124px;height:28px;background:#fff;border:1px solid #c6c6c6;display:flex;align-items:center;justify-content:space-between;padding:0 5px 0 6px;font-family:"Liberation Sans",sans-serif}
.dots{width:30px;height:28px;display:flex;flex-direction:column;align-items:center;justify-content:center;gap:2px}
.dots i{width:2px;height:2px;background:#aaa}
.fxbox{width:110px;height:28px;background:#fff;border:1px solid #c6c6c6;display:flex;align-items:center;justify-content:space-between;padding:0 13px 0 12px}
.fxbox svg+svg{margin-right:2px}
.fx{font:italic 14px "Liberation Serif",serif;color:#555;padding-bottom:2px}
.finput{margin-left:4px;flex:1;height:28px;background:#fff;border:1px solid #c6c6c6;border-right:0;display:flex;align-items:center;justify-content:space-between;padding:0 3px 2px 10px}

.sheet{height:784px;flex:none;display:flex;background:#e6e6e6;overflow:hidden;align-items:flex-start}
.grid{table-layout:fixed;border-collapse:separate;border-spacing:0;width:1492px;background:#fff;font-family:"Liberation Sans","Noto Sans CJK SC",sans-serif;font-size:13px;color:#333;flex:none}
.w19{width:19px}.w69{width:69px}.w89{width:89px}.w76{width:76px}.w103{width:103px}.w166{width:166px}.w142{width:142px}
.grid th{height:12px;padding:0;font-weight:normal;font-size:9px;line-height:10px;background:#e6e6e6;color:#444;border-right:1px solid #b4b4b4;border-bottom:1px solid #9b9b9b;text-align:center;font-family:"Liberation Sans",sans-serif}
.grid th.hsel{background:#d2d2d2;color:#217346;border-bottom:2px solid #217346}
.corner{position:relative}
.corner i{position:absolute;right:3px;bottom:2px;width:0;height:0;border-left:6px solid transparent;border-bottom:6px solid #b8b8b8}
.grid td{height:25px;padding:1px 0 0;border-right:1px solid #d4d4d4;border-bottom:1px solid #d4d4d4;text-align:center;vertical-align:middle;white-space:nowrap;line-height:23px}
.grid td.rh{padding:0;background:#e6e6e6;border-right:1px solid #9b9b9b;border-bottom:1px solid #c6c6c6;font-size:9px;line-height:8px;vertical-align:bottom;color:#444}
.grid td.rsel{background:#d2d2d2;color:#217346;border-right:2px solid #217346}
.grid td.last{border-right:1px solid #9b9b9b}
.pink{color:#e8377e}
.red{color:#e23a3a}
.cur,.stampcell{position:relative}
.selbox{position:absolute;left:-1px;top:-1px;width:71px;height:26px;border:2px solid #217346}
.handle{position:absolute;left:67px;top:23px;width:5px;height:5px;background:#217346;border:1px solid #fff}
.ddbtn{position:absolute;left:69px;top:5px;width:17px;height:17px;background:#e6e6e6;border:1px solid #a8a8a8;display:flex;align-items:center;justify-content:center}
.pointer{position:absolute;left:31px;top:-2px}
.stamp{position:absolute;left:35px;top:3px}
.vscroll{width:15px;height:784px;margin-left:2px;display:flex;flex-direction:column;flex:none;padding-top:3px;background:#dcdcdc}
.vbtn{height:14px;background:#fff;border:1px solid #bbb;display:flex;align-items:center;justify-content:center;flex:none}
.caret-up{width:0;height:0;border-left:4px solid transparent;border-right:4px solid transparent;border-bottom:4px solid #777}
.vbtn .caret{border-left-width:4px;border-right-width:4px;border-top-color:#777}
.vthumb{height:216px;background:#fff;border:1px solid #a0a0a0;flex:none}
.vtrack{height:538px;flex:none}

.sheetbar{height:29px;flex:none;display:flex;align-items:flex-start;background:#e6e6e6;border-top:1px solid #9b9b9b;border-bottom:1px solid #bdbdbd;padding-top:2px;font-size:13px;color:#555;position:relative}
.nav{width:100px;height:22px;display:flex;align-items:center;padding-left:26px;gap:24px;border-right:1px solid #999}
.tri-l{width:0;height:0;border-top:4px solid transparent;border-bottom:4px solid transparent;border-right:4px solid #c4c4c4}
.tri-r{width:0;height:0;border-top:4px solid transparent;border-bottom:4px solid transparent;border-left:4px solid #c4c4c4}
.tri-l.dark{border-right-color:#555}
.tri-r.dark{border-left-color:#555}
.stab{height:22px;line-height:19px;text-align:center;white-space:nowrap;border-right:1px solid #999;flex:none}
.sw63{width:63px}
.orange{background:#f4b183;color:#222;border-right:0;width:58px;margin-left:2px}
.active{background:#fff;color:#217346;border-bottom:3px solid #217346;border-right:0;margin-left:2px;width:77px;margin-top:-2px;height:24px;line-height:22px;box-shadow:1px 0 0 #999}
.blue{background:#bdd7ee;color:#222;border-right:0;margin-left:2px;width:111px}
.pivot{margin-left:3px;border-left:1px solid #999;width:115px}
.s-lat{width:69px;font-family:"Noto Sans","Liberation Sans",sans-serif}
.s-work{width:57px}
.addsheet{margin:4px 0 0 33px}
.d2{width:auto;height:14px;margin:5px 0 0 47px}
.hscroll{margin-left:16px;width:455px;height:15px;margin-top:4px;display:flex;background:#d9d9d9}
.hbtn{width:15px;height:15px;background:#fff;border:1px solid #a0a0a0;display:flex;align-items:center;justify-content:center;flex:none}
.hthumb{width:17px;background:#fff;border:1px solid #a0a0a0;border-left:0;flex:none}
.htrack{flex:1}

.status{height:21px;flex:none;display:flex;align-items:center;background:#f1f1f1;font-size:12px;color:#555;position:relative}
.stat{padding-bottom:2px}
.s1{margin-left:6px}
.s2{margin-left:19px}
.s3{margin-left:16px}
.view{width:38px;height:21px;display:flex;align-items:center;justify-content:center;flex:none}
.von{background:#c6c6c6;margin-left:1108px}
.zoomer{display:flex;align-items:center;margin-left:5px;height:21px;width:123px;position:relative;flex:none}
.zm{width:6px;height:2px;background:#555;margin-right:4px;flex:none}
.zline{position:relative;width:51px;height:1px;background:#999;display:block;flex:none}
.ztick{position:absolute;left:50px;top:-3px;width:1px;height:7px;background:#999}
.zknob{position:absolute;left:27px;top:-5px;width:4px;height:11px;background:#555}
.zp{position:relative;width:8px;height:2px;background:#555;margin-left:54px;flex:none}
.zp::after{content:"";position:absolute;left:3px;top:-3px;width:2px;height:8px;background:#555}
.zpct{margin-left:14px;font-family:"Liberation Sans",sans-serif;font-size:13px;padding-bottom:1px}

.ime{position:absolute;left:733px;top:1009px;height:30px;display:flex;align-items:flex-end}
.ime-s{width:29px;height:26px;background:#f05a1e;transform:rotate(-12deg);display:flex;align-items:center;justify-content:center;border-radius:3px;position:relative;z-index:1;margin-bottom:2px}
.ime-s b{font:italic bold 23px/24px "Liberation Sans",sans-serif;color:#fff}
.ime-bar{width:194px;height:25px;background:#fff;border:1px solid #bcd9f2;border-bottom:0;display:flex;align-items:center;padding-left:7px;gap:9px;margin-left:2px}
.ime-zh{font-size:14px;color:#0b6fd8;width:16px;font-weight:bold;line-height:16px}
.ime-p{font:bold 14px/14px "Liberation Sans",sans-serif;color:#0b6fd8;width:16px}
.ime-gear{margin-left:2px}
.mark{position:absolute;left:1345px;top:987px;display:flex;pointer-events:none}
.mark-logo{margin-top:3px}
.mark-text{display:flex;flex-direction:column}
.mark-text b{font-size:21px;line-height:25px;color:#4a90d4;opacity:.95;white-space:nowrap}
.mark-text span{font:18px/17px "Liberation Sans",sans-serif;color:#5fc56b;opacity:.85;white-space:nowrap;margin-top:1px}
```
